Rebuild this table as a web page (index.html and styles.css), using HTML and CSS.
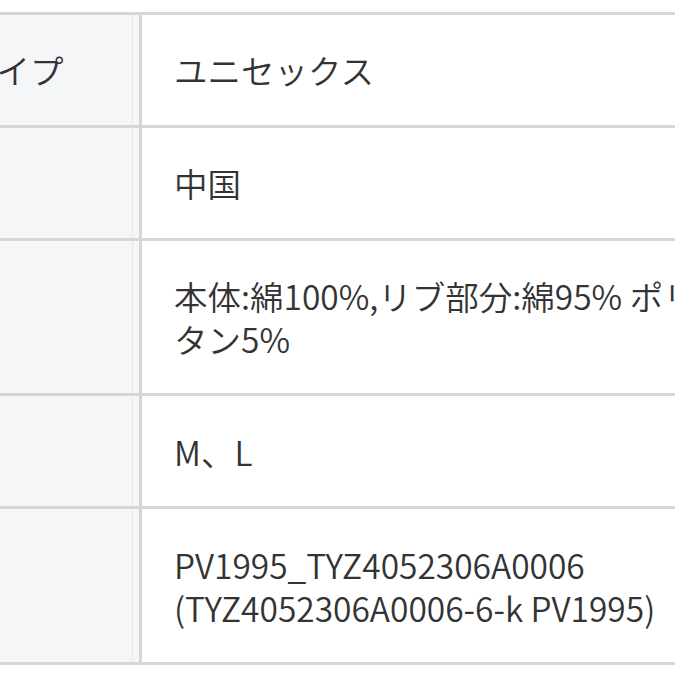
FILE: index.html
```html
<!DOCTYPE html>
<html lang="ja">
<head>
<meta charset="utf-8">
<link rel="stylesheet" href="styles.css">
</head>
<body>
<div class="spec">
  <table class="spec-table">
    <tbody>
      <tr>
        <th class="spec-label">タイプ</th>
        <td class="spec-value">ユニセックス</td>
      </tr>
      <tr>
        <th class="spec-label"></th>
        <td class="spec-value">中国</td>
      </tr>
      <tr>
        <th class="spec-label"></th>
        <td class="spec-value">本体:綿100%,リブ部分:綿95% ポリウレ<br>タン5%</td>
      </tr>
      <tr>
        <th class="spec-label"></th>
        <td class="spec-value">M、L</td>
      </tr>
      <tr>
        <th class="spec-label"></th>
        <td class="spec-value">PV1995_TYZ4052306A0006<br>(TYZ4052306A0006-6-k PV1995)</td>
      </tr>
    </tbody>
  </table>
</div>
</body>
</html>
```

FILE: styles.css
```css
html, body {
  margin: 0;
  padding: 0;
  background: #ffffff;
}
body {
  width: 675px;
  height: 675px;
  overflow: hidden;
  font-family: "Noto Sans CJK JP", "Noto Sans", sans-serif;
  color: #333333;
}
.spec {
  padding-top: 12px;
  margin-left: -69px;
}
.spec-table {
  border-collapse: separate;
  border-spacing: 0;
  width: 960px;
  font-size: 33.5px;
  line-height: 43px;
  font-weight: 350;
}
.spec-table tr:first-child th,
.spec-table tr:first-child td {
  border-top: 3px solid #d6d6d6;
}
.spec-label {
  width: 176px;
  padding: 33.4px 0 33.4px 32px;
  text-align: left;
  font-weight: 350;
  background: #f5f6f8;
  border-bottom: 3px solid #d6d6d6;
  border-right: 3px solid #d6d6d6;
  box-shadow: inset -6px 0 0 #f5f6f8, inset -7px 0 0 #e6e7ea;
  white-space: nowrap;
  overflow: hidden;
  vertical-align: middle;
}
.spec-value {
  padding: 33.4px 0 33.4px 32px;
  background: #ffffff;
  border-bottom: 3px solid #d6d6d6;
  vertical-align: middle;
  white-space: nowrap;
}
```
